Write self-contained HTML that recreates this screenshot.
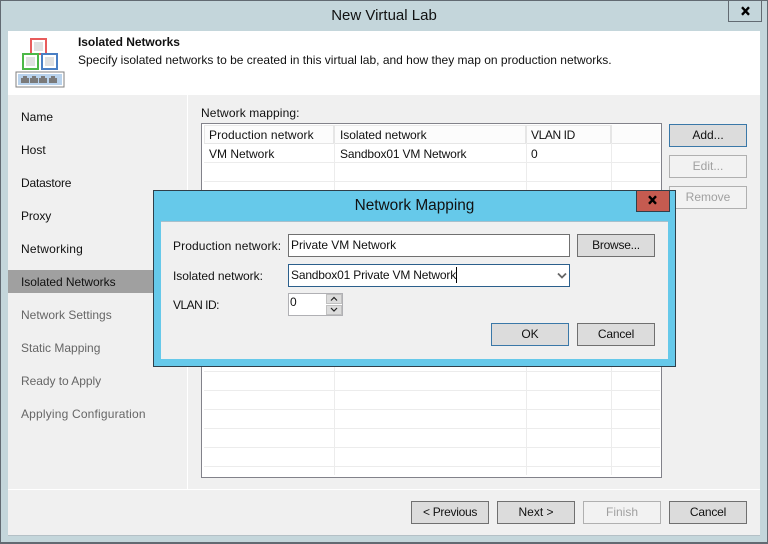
<!DOCTYPE html>
<html>
<head>
<meta charset="utf-8">
<style>
html,body{margin:0;padding:0;background:#c4d6db;}
#w{position:relative;width:768px;height:544px;overflow:hidden;font-family:"Liberation Sans",sans-serif;font-size:12px;color:#111;background:#c4d6db;}
#w div{position:absolute;box-sizing:border-box;}
.t{white-space:nowrap;line-height:16px;height:16px;}
.b{background:#dcdcdc;border:1px solid #707070;text-align:center;width:78px;height:23px;line-height:21px;color:#111;}
.d{background:#f2f2f2;border:1px solid #b0b0b0;color:#a0a0a0;}
.f{border-color:#3a78a8;}
.n{left:21px;}
.g{color:#666;}
.h{background:#ececec;height:1px;left:204px;width:456px;}
.v{background:#ececec;width:1px;top:143px;height:332px;}
.in{background:#fff;border:1px solid #707070;}
</style>
</head>
<body>
<div id="w">
  <!-- window frame -->
  <div style="left:0;top:0;width:768px;height:544px;border:1px solid #626a72;border-bottom-width:2px;"></div>
  <div class="t" style="left:0;top:8px;width:768px;text-align:center;font-size:15px;">New Virtual Lab</div>
  <div style="left:728px;top:0;width:34px;height:22px;border:1px solid #626a72;border-top:0;"></div>
  <svg style="position:absolute;left:741px;top:6px" width="10" height="10" viewBox="0 0 10 10"><path d="M1 1.2L8 8.8M8 1.2L1 8.8" stroke="#000" stroke-width="2.4" fill="none"/></svg>

  <!-- content -->
  <div style="left:8px;top:31px;width:752px;height:505px;background:#f0f0f0;border-bottom:1px solid #b4c0c6;"></div>
  <div style="left:8px;top:31px;width:752px;height:64px;background:#fff;"></div>
  <div style="left:187px;top:95px;width:1px;height:394px;background:#fff;"></div>
  <div style="left:8px;top:489px;width:752px;height:1px;background:#fff;"></div>

  <!-- header icon -->
  <svg style="position:absolute;left:14px;top:37px" width="52" height="52" viewBox="0 0 52 52" shape-rendering="crispEdges">
    <rect x="17" y="2" width="15" height="15" fill="#fff" stroke="#e85c5c" stroke-width="2"/>
    <rect x="20" y="5" width="9" height="9" fill="#e0e0e0"/>
    <rect x="9" y="17" width="15" height="15" fill="#fff" stroke="#4db848" stroke-width="2"/>
    <rect x="12" y="20" width="9" height="9" fill="#e0e0e0"/>
    <rect x="28" y="17" width="15" height="15" fill="#fff" stroke="#4a7fc4" stroke-width="2"/>
    <rect x="31" y="20" width="9" height="9" fill="#e0e0e0"/>
    <rect x="2" y="35" width="48" height="15" fill="#fff" stroke="#808080" stroke-width="1"/>
    <rect x="4" y="37" width="44" height="11" fill="#b8d2ec"/>
    <g fill="#7a7a7a">
      <path d="M9 39h4v2h2v5H7v-5h2z"/>
      <path d="M18 39h4v2h2v5h-8v-5h2z"/>
      <path d="M27 39h4v2h2v5h-8v-5h2z"/>
      <path d="M37 39h4v2h2v5h-8v-5h2z"/>
    </g>
  </svg>
  <div class="t" style="left:78px;top:34px;font-weight:bold;letter-spacing:-.05px;">Isolated Networks</div>
  <div class="t" style="left:78px;top:52px;">Specify isolated networks to be created in this virtual lab, and how they map on production networks.</div>

  <!-- nav -->
  <div style="left:8px;top:270px;width:179px;height:23px;background:#a0a0a0;"></div>
  <div class="t n" style="top:109px;">Name</div>
  <div class="t n" style="top:142px;">Host</div>
  <div class="t n" style="top:175px;letter-spacing:-.2px;">Datastore</div>
  <div class="t n" style="top:208px;letter-spacing:-.1px;">Proxy</div>
  <div class="t n" style="top:241px;letter-spacing:.2px;">Networking</div>
  <div class="t n" style="top:274px;letter-spacing:-.05px;">Isolated Networks</div>
  <div class="t n g" style="top:307px;">Network Settings</div>
  <div class="t n g" style="top:340px;">Static Mapping</div>
  <div class="t n g" style="top:373px;letter-spacing:-.05px;">Ready to Apply</div>
  <div class="t n g" style="top:406px;letter-spacing:.18px;">Applying Configuration</div>

  <!-- table -->
  <div class="t" style="left:201px;top:105px;letter-spacing:.12px;">Network mapping:</div>
  <div style="left:201px;top:123px;width:461px;height:355px;background:#fff;border:1px solid #82828a;"></div>
  <div style="left:204px;top:125px;width:456px;height:18px;background:#fcfcfc;"></div>
  <div style="left:204px;top:125px;width:407px;height:1px;background:#e8e8e8;"></div>
  <div style="left:204px;top:125px;width:1px;height:18px;background:#e8e8e8;"></div>
  <div style="left:333px;top:125px;width:2px;height:18px;background:#e6e6e6;"></div>
  <div style="left:525px;top:125px;width:2px;height:18px;background:#e6e6e6;"></div>
  <div style="left:610px;top:125px;width:2px;height:18px;background:#e6e6e6;"></div>
  <div class="h" style="top:143px;background:#e6e6e6;"></div>
  <div class="h" style="top:162px;"></div><div class="h" style="top:181px;"></div>
  <div class="h" style="top:371px;"></div><div class="h" style="top:390px;"></div><div class="h" style="top:409px;"></div>
  <div class="h" style="top:428px;"></div><div class="h" style="top:447px;"></div><div class="h" style="top:466px;"></div>
  <div class="v" style="left:334px;"></div><div class="v" style="left:526px;"></div><div class="v" style="left:611px;"></div>
  <div class="t" style="left:209px;top:127px;letter-spacing:.11px;">Production network</div>
  <div class="t" style="left:340px;top:127px;letter-spacing:-.05px;">Isolated network</div>
  <div class="t" style="left:531px;top:127px;letter-spacing:-.4px;">VLAN ID</div>
  <div class="t" style="left:209px;top:146px;">VM Network</div>
  <div class="t" style="left:340px;top:146px;letter-spacing:-.15px;">Sandbox01 VM Network</div>
  <div class="t" style="left:531px;top:146px;">0</div>

  <!-- side buttons -->
  <div class="b f" style="left:669px;top:124px;">Add...</div>
  <div class="b d" style="left:669px;top:155px;">Edit...</div>
  <div class="b d" style="left:669px;top:186px;">Remove</div>

  <!-- bottom buttons -->
  <div class="b" style="left:411px;top:501px;letter-spacing:-.3px;">&lt; Previous</div>
  <div class="b" style="left:497px;top:501px;">Next &gt;</div>
  <div class="b d" style="left:583px;top:501px;">Finish</div>
  <div class="b" style="left:669px;top:501px;letter-spacing:-.2px;">Cancel</div>

  <!-- dialog -->
  <div style="left:153px;top:190px;width:523px;height:177px;background:#66c9ea;border:1px solid #2f3f4a;"></div>
  <div class="t" style="left:153px;top:198px;width:523px;text-align:center;font-size:15.4px;">Network Mapping</div>
  <div style="left:636px;top:190px;width:34px;height:22px;background:#c55b50;border:1px solid #2f3f4a;"></div>
  <svg style="position:absolute;left:648px;top:195px" width="10" height="10" viewBox="0 0 10 10"><path d="M1 1.2L8 8.8M8 1.2L1 8.8" stroke="#000" stroke-width="2.4" fill="none"/></svg>
  <div style="left:161px;top:221px;width:507px;height:138px;background:#f0f0f0;border-top:1px solid #a8c0cc;"></div>

  <div class="t" style="left:173px;top:238px;letter-spacing:.11px;">Production network:</div>
  <div class="t" style="left:173px;top:268px;letter-spacing:-.05px;">Isolated network:</div>
  <div class="t" style="left:173px;top:297px;letter-spacing:-.5px;">VLAN ID:</div>

  <div class="in" style="left:288px;top:234px;width:282px;height:23px;"></div>
  <div class="t" style="left:291px;top:237px;letter-spacing:-.05px;">Private VM Network</div>
  <div class="in" style="left:288px;top:264px;width:282px;height:23px;border-color:#2b5f8c;"></div>
  <div class="t" style="left:291px;top:267px;letter-spacing:-.18px;">Sandbox01 Private VM Network</div>
  <div style="left:456px;top:267px;width:1px;height:16px;background:#000;"></div>
  <svg style="position:absolute;left:557px;top:272px" width="10" height="8" viewBox="0 0 10 8"><path d="M1 1.5L5 5.5L9 1.5" stroke="#666" stroke-width="1.8" fill="none"/></svg>

  <div style="left:288px;top:293px;width:55px;height:23px;background:#fff;border:1px solid #b0b0b4;"></div>
  <div style="left:326px;top:294px;width:16px;height:10px;background:#dcdcdc;border:1px solid #c0c0c0;"></div>
  <div style="left:326px;top:305px;width:16px;height:10px;background:#dcdcdc;border:1px solid #c0c0c0;"></div>
  <svg style="position:absolute;left:330px;top:296px" width="8" height="17" viewBox="0 0 8 17"><path d="M1 4.5L4 1.5L7 4.5M1 12L4 15L7 12" stroke="#222" stroke-width="1.2" fill="none"/></svg>
  <div class="t" style="left:290px;top:294px;">0</div>

  <div class="b" style="left:577px;top:234px;letter-spacing:-.25px;">Browse...</div>
  <div class="b f" style="left:491px;top:323px;">OK</div>
  <div class="b" style="left:577px;top:323px;letter-spacing:-.2px;">Cancel</div>
</div>
</body>
</html>
